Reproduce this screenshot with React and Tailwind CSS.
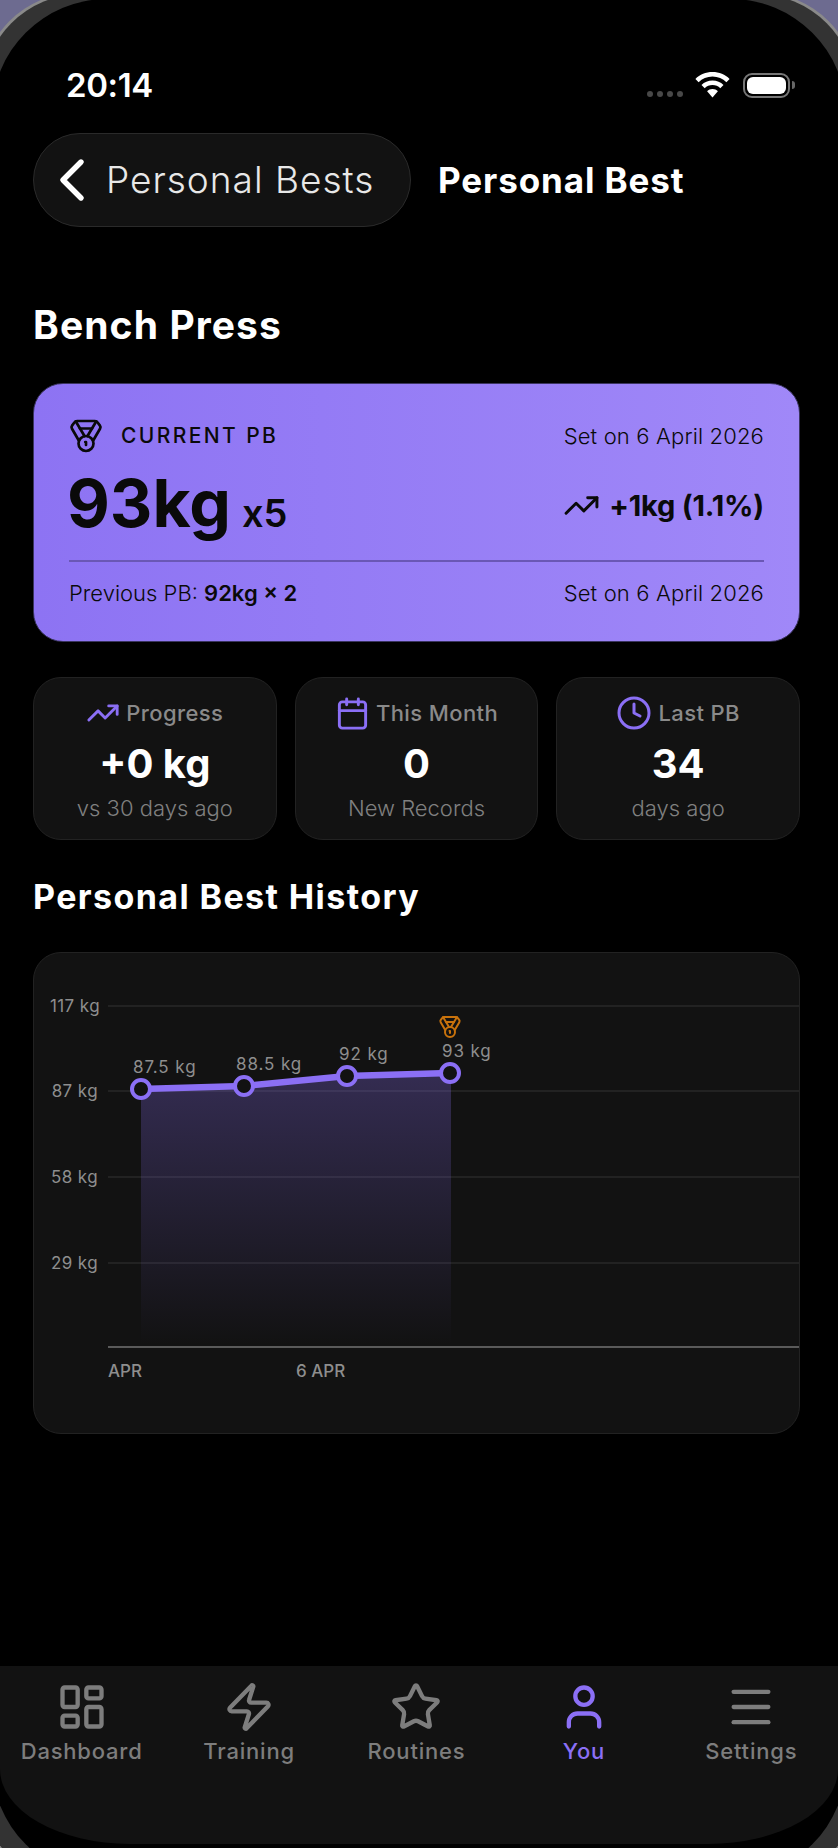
import {
  Calendar,
  ChevronLeft,
  Clock,
  LayoutDashboard,
  Medal,
  Menu,
  Star,
  TrendingUp,
  User,
  Zap,
} from "lucide-react";

const stats = [
  { Icon: TrendingUp, size: 34, label: "Progress", value: "+0 kg", sub: "vs 30 days ago" },
  { Icon: Calendar, size: 35, label: "This Month", value: "0", sub: "New Records" },
  { Icon: Clock, size: 36, label: "Last PB", value: "34", sub: "days ago" },
];

const navItems = [
  { Icon: LayoutDashboard, label: "Dashboard" },
  { Icon: Zap, label: "Training" },
  { Icon: Star, label: "Routines" },
  { Icon: User, label: "You", active: true },
  { Icon: Menu, label: "Settings" },
];

const gridLines = [1006, 1091, 1177, 1263];

const yLabels = [
  { text: "117 kg", x: 100, y: 1006 },
  { text: "87 kg", x: 98, y: 1091 },
  { text: "58 kg", x: 98, y: 1177 },
  { text: "29 kg", x: 98, y: 1263 },
];

const points = [
  { x: 141, y: 1089, label: "87.5 kg" },
  { x: 244, y: 1086, label: "88.5 kg" },
  { x: 347, y: 1076, label: "92 kg" },
  { x: 450, y: 1073, label: "93 kg" },
];

const linePath = points.map((p) => `${p.x},${p.y}`).join(" ");

const StatusBar = () => (
  <div className="flex h-[30px] items-center justify-between pl-[66px] pr-[43px]">
    <span className="text-[33px] font-semibold leading-none tracking-[-0.4px] text-white">20:14</span>
    <div className="flex items-center">
      <div className="mt-[18px] flex gap-[4px]">
        <span className="size-[6px] rounded-full bg-[#484848]" />
        <span className="size-[6px] rounded-full bg-[#484848]" />
        <span className="size-[6px] rounded-full bg-[#484848]" />
        <span className="size-[6px] rounded-full bg-[#484848]" />
      </div>
      <svg className="ml-[12px]" width="35" height="26" viewBox="0 0 35 26" fill="white">
        <path d="M17.5 0C10.8 0 4.8 2.6.4 6.9l3.2 3.3c3.6-3.5 8.5-5.6 13.9-5.6s10.3 2.1 13.9 5.6l3.2-3.3C30.2 2.6 24.2 0 17.5 0z" />
        <path d="M17.5 8.6c-4.3 0-8.2 1.7-11 4.4l3.2 3.3c2-2 4.8-3.2 7.8-3.2s5.8 1.2 7.8 3.2l3.2-3.3c-2.8-2.7-6.7-4.4-11-4.4z" />
        <path d="M17.5 17c-2.1 0-4 .8-5.4 2.2l5.4 6.4 5.4-6.4c-1.4-1.4-3.3-2.2-5.4-2.2z" />
      </svg>
      <div className="ml-[13px] flex items-center">
        <div className="h-[25px] w-[47px] rounded-[9px] border-2 border-[#777777] p-[2px]">
          <div className="h-full w-full rounded-[6px] bg-white" />
        </div>
        <div className="ml-[2px] h-[8px] w-[3px] rounded-r-sm bg-[#666666]" />
      </div>
    </div>
  </div>
);

const Header = () => (
  <div className="mt-[33px] flex items-center">
    <div className="flex h-[94px] w-[378px] items-center rounded-[47px] border border-[#2a2a2a] bg-[#121212] pl-[24px]">
      <ChevronLeft size={72} strokeWidth={1.8} className="-ml-[22px] -mr-[8px] shrink-0 text-white" />
      <span className="ml-[6px] text-[37px] font-light tracking-[1px] text-[#e8e8e8]">Personal Bests</span>
    </div>
    <span className="ml-[27px] text-[35px] font-bold tracking-[0.9px] text-white">Personal Best</span>
  </div>
);

const CurrentPb = () => (
  <div className="mt-[36px] h-[259px] rounded-[30px] border border-[#3b3560] bg-gradient-to-r from-[#8d73f3] to-[#a088f8] px-[35px] pt-[30px] text-[#0a0a0a]">
    <div className="flex h-[44px] items-center justify-between">
      <div className="flex items-center">
        <Medal size={36} strokeWidth={1.8} className="-ml-px shrink-0" />
        <span className="ml-[17px] text-[21px] font-medium tracking-[2.4px]">CURRENT PB</span>
      </div>
      <span className="text-[22px] font-light tracking-[0.15px]">Set on 6 April 2026</span>
    </div>
    <div className="mt-[8px] flex h-[74px] items-center justify-between">
      <div className="-ml-[2px] flex items-baseline">
        <span className="text-[66px] font-bold leading-none">93kg</span>
        <span className="ml-[11px] text-[38px] font-semibold leading-none">x5</span>
      </div>
      <div className="mt-[5px] flex items-center">
        <TrendingUp size={37} strokeWidth={1.9} className="shrink-0" />
        <span className="ml-[9px] text-[29px] font-bold leading-none tracking-[-0.2px]">+1kg (1.1%)</span>
      </div>
    </div>
    <div className="mt-[20px] h-[2px] bg-[#6a57b5]" />
    <div className="mt-[9px] flex h-[44px] items-center justify-between text-[22px]">
      <span className="font-light">
        Previous PB: <span className="font-semibold">92kg × 2</span>
      </span>
      <span className="font-light tracking-[0.15px]">Set on 6 April 2026</span>
    </div>
  </div>
);

const StatCards = () => (
  <div className="mt-[35px] grid h-[163px] grid-cols-3 gap-[18px]">
    {stats.map(({ Icon, size, label, value, sub }) => (
      <div key={label} className="flex flex-col items-center rounded-[28px] border border-[#222222] bg-[#121212] pt-[17px]">
        <div className="flex h-[36px] items-center">
          <Icon size={size} strokeWidth={2} className="shrink-0 text-[#8b6ff5]" />
          <span className="ml-[6px] text-[22px] font-medium tracking-[0.4px] text-[#8a8a8a]">{label}</span>
        </div>
        <span className="mt-[10px] text-[40px] font-bold leading-[46px] text-white">{value}</span>
        <span className="mt-[7px] text-[22px] font-light leading-[28px] text-[#808080]">{sub}</span>
      </div>
    ))}
  </div>
);

const HistoryChart = () => (
  <div className="mt-[35px] h-[482px] overflow-hidden rounded-[28px] border border-[#222222] bg-[#121212]">
    <svg className="block h-[482px] w-[767px] -translate-x-px -translate-y-px" viewBox="33 952 767 482">
      <defs>
        <linearGradient id="areaFill" x1="0" y1="0" x2="0" y2="1">
          <stop offset="0" stopColor="#8b6ff5" stopOpacity="0.28" />
          <stop offset="1" stopColor="#8b6ff5" stopOpacity="0" />
        </linearGradient>
        <clipPath id="tickClip">
          <rect x="108" y="1350" width="692" height="40" />
        </clipPath>
      </defs>
      {gridLines.map((y) => (
        <line key={y} x1="108" x2="800" y1={y} y2={y} stroke="#222222" strokeWidth="2" />
      ))}
      <line x1="108" x2="800" y1="1347" y2="1347" stroke="#5a5a5a" strokeWidth="2" />
      <polygon points={`${linePath} 451,1073 451,1345 141,1345`} fill="url(#areaFill)" />
      {yLabels.map((l) => (
        <text key={l.text} x={l.x} y={l.y + 6} textAnchor="end" fontSize="17" letterSpacing="0.4" fill="#8e8e8e">
          {l.text}
        </text>
      ))}
      <polyline points={linePath} fill="none" stroke="#8b6ff5" strokeWidth="6.5" />
      {points.map((p) => (
        <g key={p.x}>
          <circle cx={p.x} cy={p.y} r="9" fill="#121212" stroke="#8b6ff5" strokeWidth="4" />
          <text x={p.x - 8} y={p.y - 16} fontSize="17" letterSpacing="0.9" fill="#8e8e8e">
            {p.label}
          </text>
        </g>
      ))}
      <Medal x="438" y="1015" width="24" height="24" strokeWidth="2" stroke="#c8720c" />
      <g fontSize="17" fontWeight="500" fill="#8e8e8e">
        <text x="142" y="1377" textAnchor="end" clipPath="url(#tickClip)">6 APR</text>
        <text x="296" y="1377">6 APR</text>
      </g>
    </svg>
  </div>
);

const BottomNav = () => (
  <nav className="mb-[4px] mt-auto rounded-b-[130px_75px] bg-[#121212] pt-[15px]">
    <div className="-ml-[2px] mr-[3px] grid h-[163px] grid-cols-5">
      {navItems.map(({ Icon, label, active }) => (
        <div key={label} className={active ? "flex flex-col items-center text-[#8b6ff5]" : "flex flex-col items-center text-[#7d7d7d]"}>
          <Icon size={52} strokeWidth={2} />
          <span className="mt-[4px] text-[22px] font-medium leading-[28px] tracking-[0.8px]">{label}</span>
        </div>
      ))}
    </div>
  </nav>
);

export default function App() {
  return (
    <div className="relative h-[1848px] w-[838px] overflow-hidden bg-[#6d6b90] font-[family-name:Inter,sans-serif]">
      <div className="absolute -inset-x-[20px] -top-[8px] -bottom-[40px] rounded-[100px] bg-[#8a8a8a]" />
      <div className="absolute -inset-x-[18px] -top-[6px] -bottom-[40px] rounded-[100px] bg-[#333333]" />
      <div className="absolute -inset-x-[8px] -top-px -bottom-[30px] rounded-[115px] bg-black" />
      <div className="relative flex h-full flex-col">
        <div className="pt-[70px]">
          <StatusBar />
        </div>
        <main className="pl-[33px] pr-[38px]">
          <Header />
          <h1 className="mt-[76px] h-[44px] text-[39px] font-bold leading-[44px] tracking-[1.1px] text-white">Bench Press</h1>
          <CurrentPb />
          <StatCards />
          <h2 className="mt-[37px] h-[40px] text-[34px] font-bold leading-[40px] tracking-[1.4px] text-white">Personal Best History</h2>
          <HistoryChart />
        </main>
        <BottomNav />
      </div>
    </div>
  );
}
